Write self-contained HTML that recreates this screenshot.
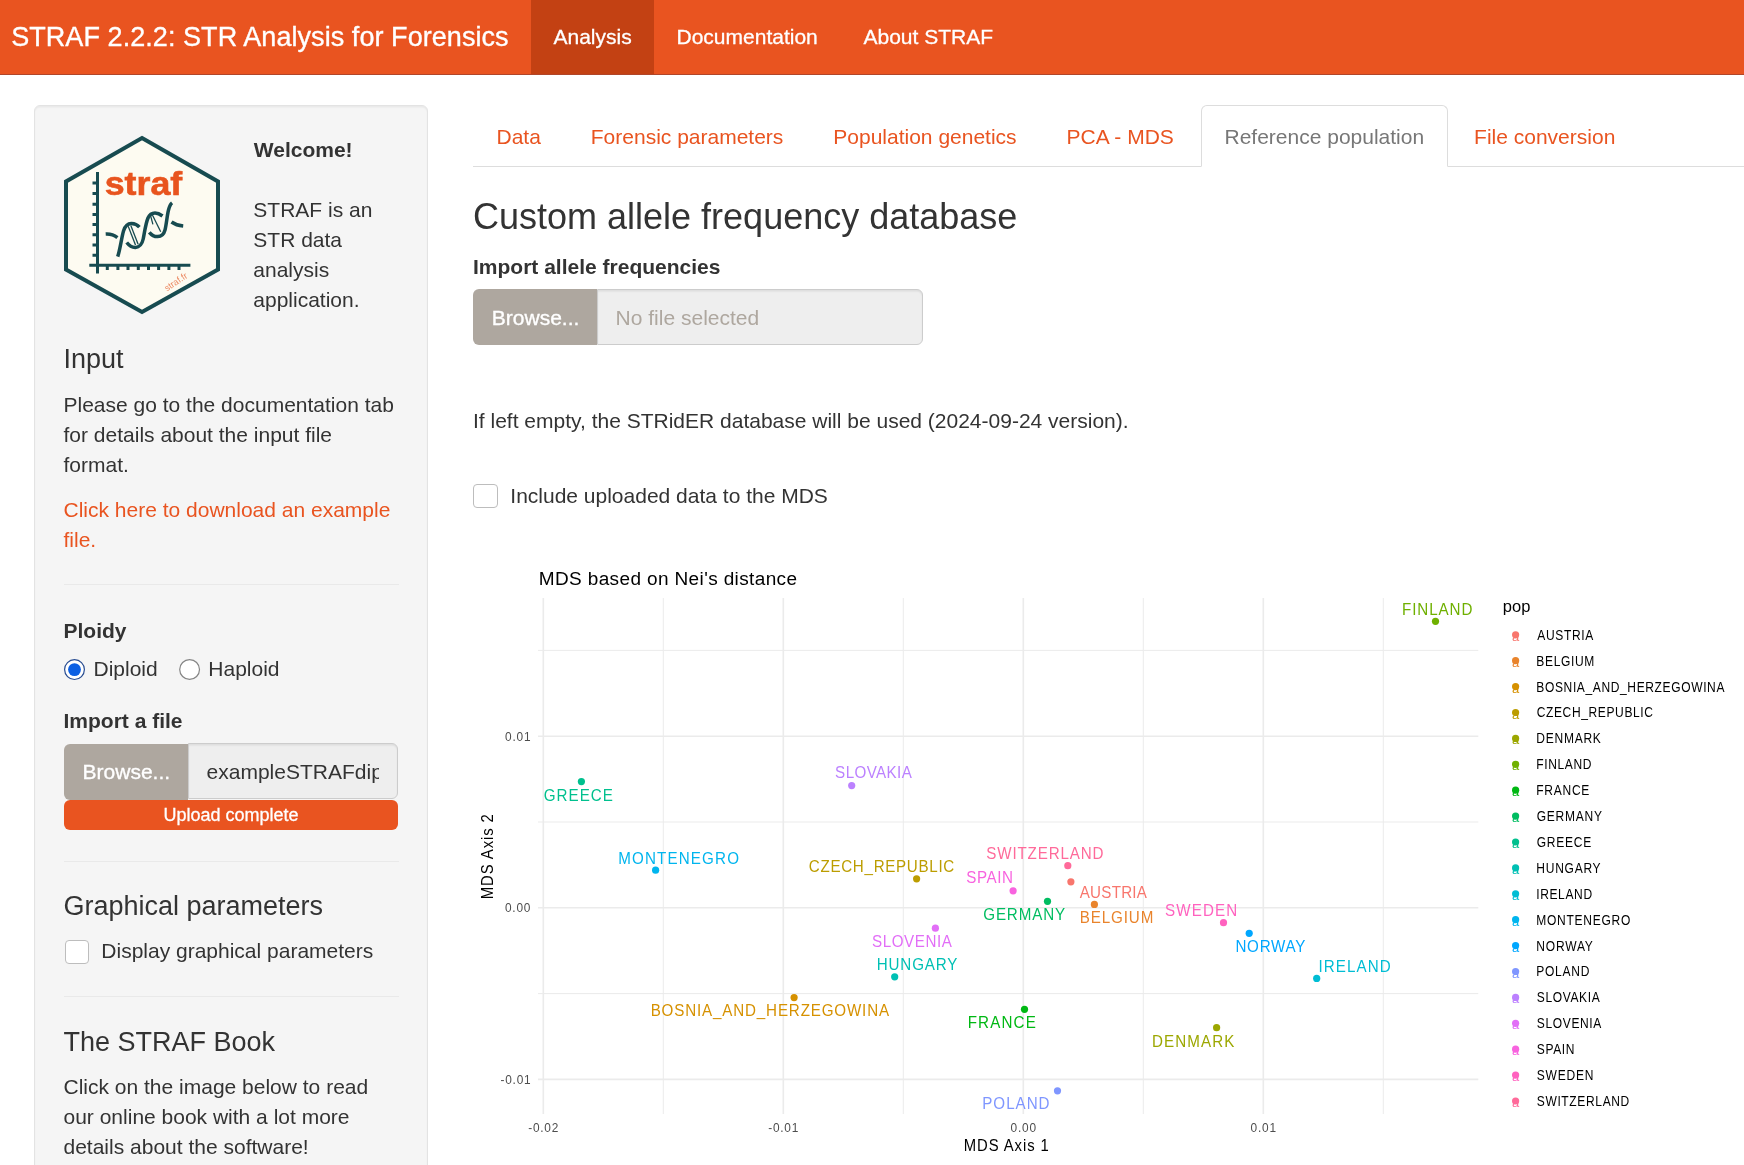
<!DOCTYPE html>
<html>
<head>
<meta charset="utf-8">
<style>
*{box-sizing:border-box;margin:0;padding:0}
html,body{width:1744px;height:1165px;overflow:hidden;background:#fff}
body{font-family:"Liberation Sans",sans-serif;color:#333;font-size:21px;line-height:30px;position:relative;will-change:transform}
.a{position:absolute;white-space:nowrap}
#nav{position:absolute;left:0;top:0;width:1744px;height:75px;background:#E95420;border-bottom:1px solid #B0462A}
#nav .act{position:absolute;left:531px;top:0;width:123px;height:74px;background:#C34113}
.nt{color:#fff;font-size:21px;line-height:30px;-webkit-text-stroke:0.3px #fff}
.wt{-webkit-text-stroke:0.35px #fff}
#well{position:absolute;left:34px;top:105px;width:394px;height:1200px;background:#F5F5F5;border:1px solid #E3E3E3;border-radius:6px;box-shadow:inset 0 1.5px 1.5px rgba(0,0,0,.05)}
.h4{font-size:27px;line-height:30px}
.b{font-weight:bold}
.hr{position:absolute;height:1px;background:#E9E9E9}
.btn{position:absolute;background:#AEA79F;color:#fff;border-radius:6px 0 0 6px}
.inp{position:absolute;background:#EEEEEE;border:1px solid #CCCCCC;border-radius:0 6px 6px 0;box-shadow:inset 0 1.5px 1.5px rgba(0,0,0,.075);overflow:hidden}
.cb{position:absolute;width:24px;height:24px;background:#fff;border:1px solid #BDBDBD;border-radius:4px}
.tab{color:#E95420}
.lbl{font-size:16.5px;line-height:20px}
.tick{font-size:13.2px;line-height:16px;color:#4D4D4D}
.leg{font-size:13.2px;line-height:16px;color:#000}
</style>
</head>
<body>
<!-- NAVBAR -->
<div id="nav">
  <div class="act"></div>
  <div class="a wt" style="left:11.2px;top:19px;font-size:27px;line-height:36px;color:#fff;letter-spacing:0.06px">STRAF 2.2.2: STR Analysis for Forensics</div>
  <div class="a nt" style="left:553.5px;top:22px">Analysis</div>
  <div class="a nt" style="left:676.5px;top:22px">Documentation</div>
  <div class="a nt" style="left:863.5px;top:22px">About STRAF</div>
</div>

<!-- SIDEBAR -->
<div id="well"></div>
<svg class="a" style="left:60px;top:130px" width="165" height="190" viewBox="0 0 165 190">
  <polygon points="82,8 158,51.5 158,139.5 82,182 6,139.5 6,51.5" fill="#FDFBF1" stroke="#174B50" stroke-width="4" stroke-linejoin="miter"/>
  <g stroke="#174B50" fill="none">
    <line x1="37.5" y1="42" x2="37.5" y2="143.5" stroke-width="3"/>
    <line x1="29.3" y1="135.3" x2="130.4" y2="135.3" stroke-width="3"/>
    <path d="M32.5 53H37.5M32.5 63.6H37.5M32.5 74.2H37.5M32.5 84.5H37.5M32.5 94.6H37.5M32.5 104.7H37.5M32.5 115H37.5M32.5 125.2H37.5" stroke-width="3"/>
    <path d="M47.3 135V140M57.9 135V140M68 135V140M78.3 135V140M88.5 135V140M98.6 135V140M108.9 135V140M119 135V140" stroke-width="3"/>
  </g>
  <text x="44.7" y="64.7" font-family="Liberation Sans" font-weight="bold" font-size="33" fill="#E8541E" stroke="#E8541E" stroke-width="0.6" textLength="77.5" lengthAdjust="spacingAndGlyphs">straf</text>
  <text x="0" y="0" font-family="Liberation Sans" font-size="9" fill="#EC8A63" transform="translate(107,161.5) rotate(-34)">straf.fr</text>
  <g fill="none" stroke="#174B50" stroke-width="3.5" stroke-linecap="butt">
    <path d="M57.7 126.6 C60 120 61.5 108 63.5 101 C65.5 95 68.5 93.5 71.5 93.6 C74.5 93.7 77.5 95 79.4 97.2"/>
    <path d="M66.7 112.5 C69 115.5 72.5 117.5 75.5 117.4 C79.5 117.2 82 114.5 83.2 109 C84.5 103 85.5 94 88 88 C89.5 84.5 92 83 95 83 C98 83 100.5 84.5 102.5 86"/>
    <path d="M89.3 102.3 C91.5 105 94.5 106.7 97.7 106.6 C101 106.5 103.8 104.5 105 100 C106.5 94 107 86 108.5 80 C109.5 76 110.5 74 112.1 72.8"/>
    <path d="M45.7 104.1 C49 103.9 54 105 57.4 107.7"/>
    <path d="M111.5 92 C114 93.8 118 95.5 123.2 96"/>
  </g>
  <g stroke="#174B50" stroke-width="1.3">
    <line x1="68.2" y1="96.2" x2="75.5" y2="114.9"/>
    <line x1="70.8" y1="95.6" x2="78.1" y2="114.3"/>
    <line x1="90.5" y1="85.4" x2="92.9" y2="94.4"/>
    <line x1="92.3" y1="84.8" x2="100.7" y2="101.7"/>
  </g>
</svg>
<div class="a b" style="left:253.8px;top:134.7px">Welcome!</div>
<div class="a" style="left:253.3px;top:194.7px;line-height:30px">STRAF is an<br>STR data<br>analysis<br>application.</div>

<div class="a h4" style="left:63.5px;top:343.6px">Input</div>
<div class="a" style="left:63.5px;top:389.7px">Please go to the documentation tab<br>for details about the input file<br>format.</div>
<div class="a" style="left:63.5px;top:494.5px;color:#E95420">Click here to download an example<br>file.</div>
<div class="hr" style="left:63.5px;top:584px;width:335px"></div>

<div class="a b" style="left:63.5px;top:615.7px">Ploidy</div>
<svg class="a" style="left:63px;top:658px" width="24" height="24" viewBox="0 0 24 24">
  <circle cx="11.5" cy="11.6" r="9.9" fill="#fff" stroke="#284C91" stroke-width="1.2"/>
  <circle cx="11.5" cy="11.6" r="6.4" fill="#0B5FE3"/>
</svg>
<div class="a" style="left:93.5px;top:654.3px">Diploid</div>
<svg class="a" style="left:178px;top:658px" width="24" height="24" viewBox="0 0 24 24">
  <circle cx="11.6" cy="11.5" r="9.9" fill="#fff" stroke="#858585" stroke-width="1.2"/>
</svg>
<div class="a" style="left:208.3px;top:654.3px">Haploid</div>

<div class="a b" style="left:63.5px;top:706.4px">Import a file</div>
<div class="btn" style="left:64px;top:743.5px;width:124px;height:56px"></div>
<div class="a wt" style="left:82.6px;top:756.7px;color:#fff">Browse...</div>
<div class="inp" style="left:188px;top:743.2px;width:210px;height:56px">
  <div class="a" style="left:17.6px;top:12.5px;color:#333;width:172.4px;overflow:hidden">exampleSTRAFdiploid.txt</div>
</div>
<div class="a" style="left:64px;top:800px;width:334px;height:30px;background:#E95420;border-radius:6px"></div>
<div class="a wt" style="left:64px;top:802.8px;width:334px;text-align:center;color:#fff;font-size:18px;line-height:24px;-webkit-text-stroke:0.3px #fff">Upload complete</div>
<div class="hr" style="left:63.5px;top:860.5px;width:335px"></div>

<div class="a h4" style="left:63.5px;top:890.5px">Graphical parameters</div>
<div class="cb" style="left:64.5px;top:939.5px"></div>
<div class="a" style="left:101.3px;top:936.4px">Display graphical parameters</div>
<div class="hr" style="left:63.5px;top:995.5px;width:335px"></div>

<div class="a h4" style="left:63.5px;top:1027.3px">The STRAF Book</div>
<div class="a" style="left:63.5px;top:1072.2px">Click on the image below to read<br>our online book with a lot more<br>details about the software!</div>

<!-- MAIN: TABS -->
<div class="a" style="left:473px;top:166px;width:1271px;height:1px;background:#DDDDDD"></div>
<div class="a" style="left:1201px;top:105px;width:247px;height:62px;background:#fff;border:1px solid #DDDDDD;border-bottom-color:transparent;border-radius:6px 6px 0 0"></div>
<div class="a tab" style="left:496.5px;top:122px">Data</div>
<div class="a tab" style="left:590.8px;top:122px">Forensic parameters</div>
<div class="a tab" style="left:833.3px;top:122px">Population genetics</div>
<div class="a tab" style="left:1066.5px;top:122px">PCA - MDS</div>
<div class="a" style="left:1224.5px;top:122px;color:#777">Reference population</div>
<div class="a tab" style="left:1474.1px;top:122px">File conversion</div>

<div class="a" style="left:473px;top:196.8px;font-size:36px;line-height:40px">Custom allele frequency database</div>
<div class="a b" style="left:473px;top:251.6px">Import allele frequencies</div>
<div class="btn" style="left:473px;top:289px;width:124px;height:56px"></div>
<div class="a wt" style="left:491.8px;top:302.7px;color:#fff">Browse...</div>
<div class="inp" style="left:597px;top:289px;width:326px;height:56px"></div>
<div class="a" style="left:615.6px;top:302.7px;color:#AEA79F">No file selected</div>

<div class="a" style="left:473px;top:405.6px">If left empty, the STRidER database will be used (2024-09-24 version).</div>
<div class="cb" style="left:473.2px;top:484.2px;width:24.5px;height:24.3px"></div>
<div class="a" style="left:510.3px;top:480.8px">Include uploaded data to the MDS</div>

<!-- PLOT -->
<svg class="a" style="left:0;top:0" width="1744" height="1165" viewBox="0 0 1744 1165">
  <g stroke="#EBEBEB" stroke-width="1">
    <line x1="538" y1="650.4" x2="1478.3" y2="650.4"/>
    <line x1="538" y1="822" x2="1478.3" y2="822"/>
    <line x1="538" y1="993.6" x2="1478.3" y2="993.6"/>
    <line x1="663.3" y1="598" x2="663.3" y2="1114"/>
    <line x1="903.3" y1="598" x2="903.3" y2="1114"/>
    <line x1="1143.3" y1="598" x2="1143.3" y2="1114"/>
    <line x1="1383.3" y1="598" x2="1383.3" y2="1114"/>
  </g>
  <g stroke="#EBEBEB" stroke-width="1.6">
    <line x1="538" y1="736.2" x2="1478.3" y2="736.2"/>
    <line x1="538" y1="907.8" x2="1478.3" y2="907.8"/>
    <line x1="538" y1="1079.4" x2="1478.3" y2="1079.4"/>
    <line x1="543.3" y1="598" x2="543.3" y2="1114"/>
    <line x1="783.3" y1="598" x2="783.3" y2="1114"/>
    <line x1="1023.3" y1="598" x2="1023.3" y2="1114"/>
    <line x1="1263.3" y1="598" x2="1263.3" y2="1114"/>
  </g>
  <g>
    <circle cx="1070.9" cy="881.8" r="3.6" fill="#F8766D"/>
    <circle cx="1094.4" cy="904.4" r="3.6" fill="#E9842C"/>
    <circle cx="794.1" cy="997.6" r="3.6" fill="#D69100"/>
    <circle cx="916.6" cy="878.8" r="3.6" fill="#BC9D00"/>
    <circle cx="1216.6" cy="1027.7" r="3.6" fill="#9CA700"/>
    <circle cx="1435.5" cy="621.3" r="3.6" fill="#6FB000"/>
    <circle cx="1024.5" cy="1009.3" r="3.6" fill="#00B813"/>
    <circle cx="1047.5" cy="901.3" r="3.6" fill="#00BD61"/>
    <circle cx="581.4" cy="781.6" r="3.6" fill="#00C08E"/>
    <circle cx="894.7" cy="976.8" r="3.6" fill="#00C0B4"/>
    <circle cx="1316.7" cy="978.4" r="3.6" fill="#00BDD4"/>
    <circle cx="655.6" cy="870.2" r="3.6" fill="#00B5EE"/>
    <circle cx="1249.2" cy="933.3" r="3.6" fill="#00A7FF"/>
    <circle cx="1057.5" cy="1090.8" r="3.6" fill="#7F96FF"/>
    <circle cx="851.7" cy="785.6" r="3.6" fill="#BC81FF"/>
    <circle cx="935.4" cy="928.2" r="3.6" fill="#E26EF7"/>
    <circle cx="1013.1" cy="890.8" r="3.6" fill="#F863DF"/>
    <circle cx="1223.5" cy="922.7" r="3.6" fill="#FF62BF"/>
    <circle cx="1067.8" cy="865.7" r="3.6" fill="#FF6A9A"/>
  </g>
  <g font-family="Liberation Sans">
    <text transform="translate(1079.77,897.50) scale(0.92,1)" font-size="16.5" letter-spacing="0.248" fill="#F8766D">AUSTRIA</text>
    <text transform="translate(1079.75,922.70) scale(0.92,1)" font-size="16.5" letter-spacing="0.954" fill="#E9842C">BELGIUM</text>
    <text transform="translate(650.65,1015.60) scale(0.92,1)" font-size="16.5" letter-spacing="0.910" fill="#D69100">BOSNIA_AND_HERZEGOWINA</text>
    <text transform="translate(808.83,871.60) scale(0.92,1)" font-size="16.5" letter-spacing="0.744" fill="#BC9D00">CZECH_REPUBLIC</text>
    <text transform="translate(1152.05,1046.60) scale(0.92,1)" font-size="16.5" letter-spacing="1.161" fill="#9CA700">DENMARK</text>
    <text transform="translate(1401.95,614.80) scale(0.92,1)" font-size="16.5" letter-spacing="1.001" fill="#6FB000">FINLAND</text>
    <text transform="translate(967.65,1027.70) scale(0.92,1)" font-size="16.5" letter-spacing="1.258" fill="#00B813">FRANCE</text>
    <text transform="translate(983.24,919.60) scale(0.92,1)" font-size="16.5" letter-spacing="0.932" fill="#00BD61">GERMANY</text>
    <text transform="translate(543.64,801.00) scale(0.92,1)" font-size="16.5" letter-spacing="1.132" fill="#00C08E">GREECE</text>
    <text transform="translate(876.75,969.70) scale(0.92,1)" font-size="16.5" letter-spacing="0.919" fill="#00C0B4">HUNGARY</text>
    <text transform="translate(1318.50,971.70) scale(0.92,1)" font-size="16.5" letter-spacing="1.183" fill="#00BDD4">IRELAND</text>
    <text transform="translate(618.25,863.60) scale(0.92,1)" font-size="16.5" letter-spacing="1.243" fill="#00B5EE">MONTENEGRO</text>
    <text transform="translate(1235.45,951.60) scale(0.92,1)" font-size="16.5" letter-spacing="0.776" fill="#00A7FF">NORWAY</text>
    <text transform="translate(982.25,1108.50) scale(0.92,1)" font-size="16.5" letter-spacing="1.075" fill="#7F96FF">POLAND</text>
    <text transform="translate(835.11,778.40) scale(0.92,1)" font-size="16.5" letter-spacing="0.439" fill="#BC81FF">SLOVAKIA</text>
    <text transform="translate(872.01,947.10) scale(0.92,1)" font-size="16.5" letter-spacing="0.619" fill="#E26EF7">SLOVENIA</text>
    <text transform="translate(966.21,883.40) scale(0.92,1)" font-size="16.5" letter-spacing="0.617" fill="#F863DF">SPAIN</text>
    <text transform="translate(1165.11,915.80) scale(0.92,1)" font-size="16.5" letter-spacing="1.196" fill="#FF62BF">SWEDEN</text>
    <text transform="translate(986.31,858.50) scale(0.92,1)" font-size="16.5" letter-spacing="0.915" fill="#FF6A9A">SWITZERLAND</text>
  </g>
  <g font-family="Liberation Sans">
    <text transform="translate(538.74,584.60) scale(0.99,1)" font-size="19.2" letter-spacing="0.375" fill="#000">MDS based on Nei&#39;s distance</text>
    <text transform="translate(528.35,1131.80) scale(0.9,1)" font-size="13.2" letter-spacing="0.801" fill="#4D4D4D">-0.02</text>
    <text transform="translate(768.34,1131.80) scale(0.9,1)" font-size="13.2" letter-spacing="0.802" fill="#4D4D4D">-0.01</text>
    <text transform="translate(1010.51,1131.80) scale(0.9,1)" font-size="13.2" letter-spacing="0.913" fill="#4D4D4D">0.00</text>
    <text transform="translate(1250.57,1131.80) scale(0.9,1)" font-size="13.2" letter-spacing="0.909" fill="#4D4D4D">0.01</text>
    <text transform="translate(505.01,740.80) scale(0.9,1)" font-size="13.2" letter-spacing="0.909" fill="#4D4D4D">0.01</text>
    <text transform="translate(504.88,912.40) scale(0.9,1)" font-size="13.2" letter-spacing="0.913" fill="#4D4D4D">0.00</text>
    <text transform="translate(500.62,1084.00) scale(0.9,1)" font-size="13.2" letter-spacing="0.802" fill="#4D4D4D">-0.01</text>
    <text transform="translate(963.77,1151.00) scale(0.9,1)" font-size="16.5" letter-spacing="1.037" fill="#000">MDS Axis 1</text>
    <g transform="translate(493.2,856) rotate(-90)"><text transform="translate(-43.22,0.00) scale(0.9,1)" font-size="16.5" letter-spacing="1.037" fill="#000">MDS Axis 2</text></g>
    <text transform="translate(1502.84,611.50) scale(1.0,1)" font-size="16.5" letter-spacing="0.000" fill="#000">pop</text>
    <text x="1515.6" y="640.8" font-size="13" text-anchor="middle" fill="#F8766D">a</text><circle cx="1515.6" cy="634.8" r="3.6" fill="#F8766D"/>
    <text transform="translate(1537.28,639.70) scale(0.86,1)" font-size="14" letter-spacing="0.752" fill="#000">AUSTRIA</text>
    <text x="1515.6" y="666.7" font-size="13" text-anchor="middle" fill="#E9842C">a</text><circle cx="1515.6" cy="660.7" r="3.6" fill="#E9842C"/>
    <text transform="translate(1536.31,665.60) scale(0.86,1)" font-size="14" letter-spacing="0.753" fill="#000">BELGIUM</text>
    <text x="1515.6" y="692.6" font-size="13" text-anchor="middle" fill="#D69100">a</text><circle cx="1515.6" cy="686.6" r="3.6" fill="#D69100"/>
    <text transform="translate(1536.31,691.50) scale(0.86,1)" font-size="14" letter-spacing="0.718" fill="#000">BOSNIA_AND_HERZEGOWINA</text>
    <text x="1515.6" y="718.5" font-size="13" text-anchor="middle" fill="#BC9D00">a</text><circle cx="1515.6" cy="712.5" r="3.6" fill="#BC9D00"/>
    <text transform="translate(1536.69,717.40) scale(0.86,1)" font-size="14" letter-spacing="0.714" fill="#000">CZECH_REPUBLIC</text>
    <text x="1515.6" y="744.4" font-size="13" text-anchor="middle" fill="#9CA700">a</text><circle cx="1515.6" cy="738.4" r="3.6" fill="#9CA700"/>
    <text transform="translate(1536.31,743.30) scale(0.86,1)" font-size="14" letter-spacing="0.852" fill="#000">DENMARK</text>
    <text x="1515.6" y="770.3" font-size="13" text-anchor="middle" fill="#6FB000">a</text><circle cx="1515.6" cy="764.3" r="3.6" fill="#6FB000"/>
    <text transform="translate(1536.31,769.20) scale(0.86,1)" font-size="14" letter-spacing="0.720" fill="#000">FINLAND</text>
    <text x="1515.6" y="796.2" font-size="13" text-anchor="middle" fill="#00B813">a</text><circle cx="1515.6" cy="790.2" r="3.6" fill="#00B813"/>
    <text transform="translate(1536.31,795.10) scale(0.86,1)" font-size="14" letter-spacing="0.831" fill="#000">FRANCE</text>
    <text x="1515.6" y="822.1" font-size="13" text-anchor="middle" fill="#00BD61">a</text><circle cx="1515.6" cy="816.1" r="3.6" fill="#00BD61"/>
    <text transform="translate(1536.69,821.00) scale(0.86,1)" font-size="14" letter-spacing="0.865" fill="#000">GERMANY</text>
    <text x="1515.6" y="848.0" font-size="13" text-anchor="middle" fill="#00C08E">a</text><circle cx="1515.6" cy="842.0" r="3.6" fill="#00C08E"/>
    <text transform="translate(1536.69,846.90) scale(0.86,1)" font-size="14" letter-spacing="0.861" fill="#000">GREECE</text>
    <text x="1515.6" y="873.9" font-size="13" text-anchor="middle" fill="#00C0B4">a</text><circle cx="1515.6" cy="867.9" r="3.6" fill="#00C0B4"/>
    <text transform="translate(1536.31,872.80) scale(0.86,1)" font-size="14" letter-spacing="0.850" fill="#000">HUNGARY</text>
    <text x="1515.6" y="899.8" font-size="13" text-anchor="middle" fill="#00BDD4">a</text><circle cx="1515.6" cy="893.8" r="3.6" fill="#00BDD4"/>
    <text transform="translate(1536.19,898.70) scale(0.86,1)" font-size="14" letter-spacing="0.728" fill="#000">IRELAND</text>
    <text x="1515.6" y="925.7" font-size="13" text-anchor="middle" fill="#00B5EE">a</text><circle cx="1515.6" cy="919.7" r="3.6" fill="#00B5EE"/>
    <text transform="translate(1536.31,924.60) scale(0.86,1)" font-size="14" letter-spacing="0.827" fill="#000">MONTENEGRO</text>
    <text x="1515.6" y="951.6" font-size="13" text-anchor="middle" fill="#00A7FF">a</text><circle cx="1515.6" cy="945.6" r="3.6" fill="#00A7FF"/>
    <text transform="translate(1536.31,950.50) scale(0.86,1)" font-size="14" letter-spacing="0.916" fill="#000">NORWAY</text>
    <text x="1515.6" y="977.5" font-size="13" text-anchor="middle" fill="#7F96FF">a</text><circle cx="1515.6" cy="971.5" r="3.6" fill="#7F96FF"/>
    <text transform="translate(1536.31,976.40) scale(0.86,1)" font-size="14" letter-spacing="0.830" fill="#000">POLAND</text>
    <text x="1515.6" y="1003.4" font-size="13" text-anchor="middle" fill="#BC81FF">a</text><circle cx="1515.6" cy="997.4" r="3.6" fill="#BC81FF"/>
    <text transform="translate(1536.75,1002.30) scale(0.86,1)" font-size="14" letter-spacing="0.729" fill="#000">SLOVAKIA</text>
    <text x="1515.6" y="1029.3" font-size="13" text-anchor="middle" fill="#E26EF7">a</text><circle cx="1515.6" cy="1023.3" r="3.6" fill="#E26EF7"/>
    <text transform="translate(1536.75,1028.20) scale(0.86,1)" font-size="14" letter-spacing="0.737" fill="#000">SLOVENIA</text>
    <text x="1515.6" y="1055.2" font-size="13" text-anchor="middle" fill="#F863DF">a</text><circle cx="1515.6" cy="1049.2" r="3.6" fill="#F863DF"/>
    <text transform="translate(1536.75,1054.10) scale(0.86,1)" font-size="14" letter-spacing="0.749" fill="#000">SPAIN</text>
    <text x="1515.6" y="1081.1" font-size="13" text-anchor="middle" fill="#FF62BF">a</text><circle cx="1515.6" cy="1075.1" r="3.6" fill="#FF62BF"/>
    <text transform="translate(1536.75,1080.00) scale(0.86,1)" font-size="14" letter-spacing="0.888" fill="#000">SWEDEN</text>
    <text x="1515.6" y="1107.0" font-size="13" text-anchor="middle" fill="#FF6A9A">a</text><circle cx="1515.6" cy="1101.0" r="3.6" fill="#FF6A9A"/>
    <text transform="translate(1536.75,1105.90) scale(0.86,1)" font-size="14" letter-spacing="0.737" fill="#000">SWITZERLAND</text>
  </g>
</svg>
<!-- ENDPLOT -->
</body>
</html>
